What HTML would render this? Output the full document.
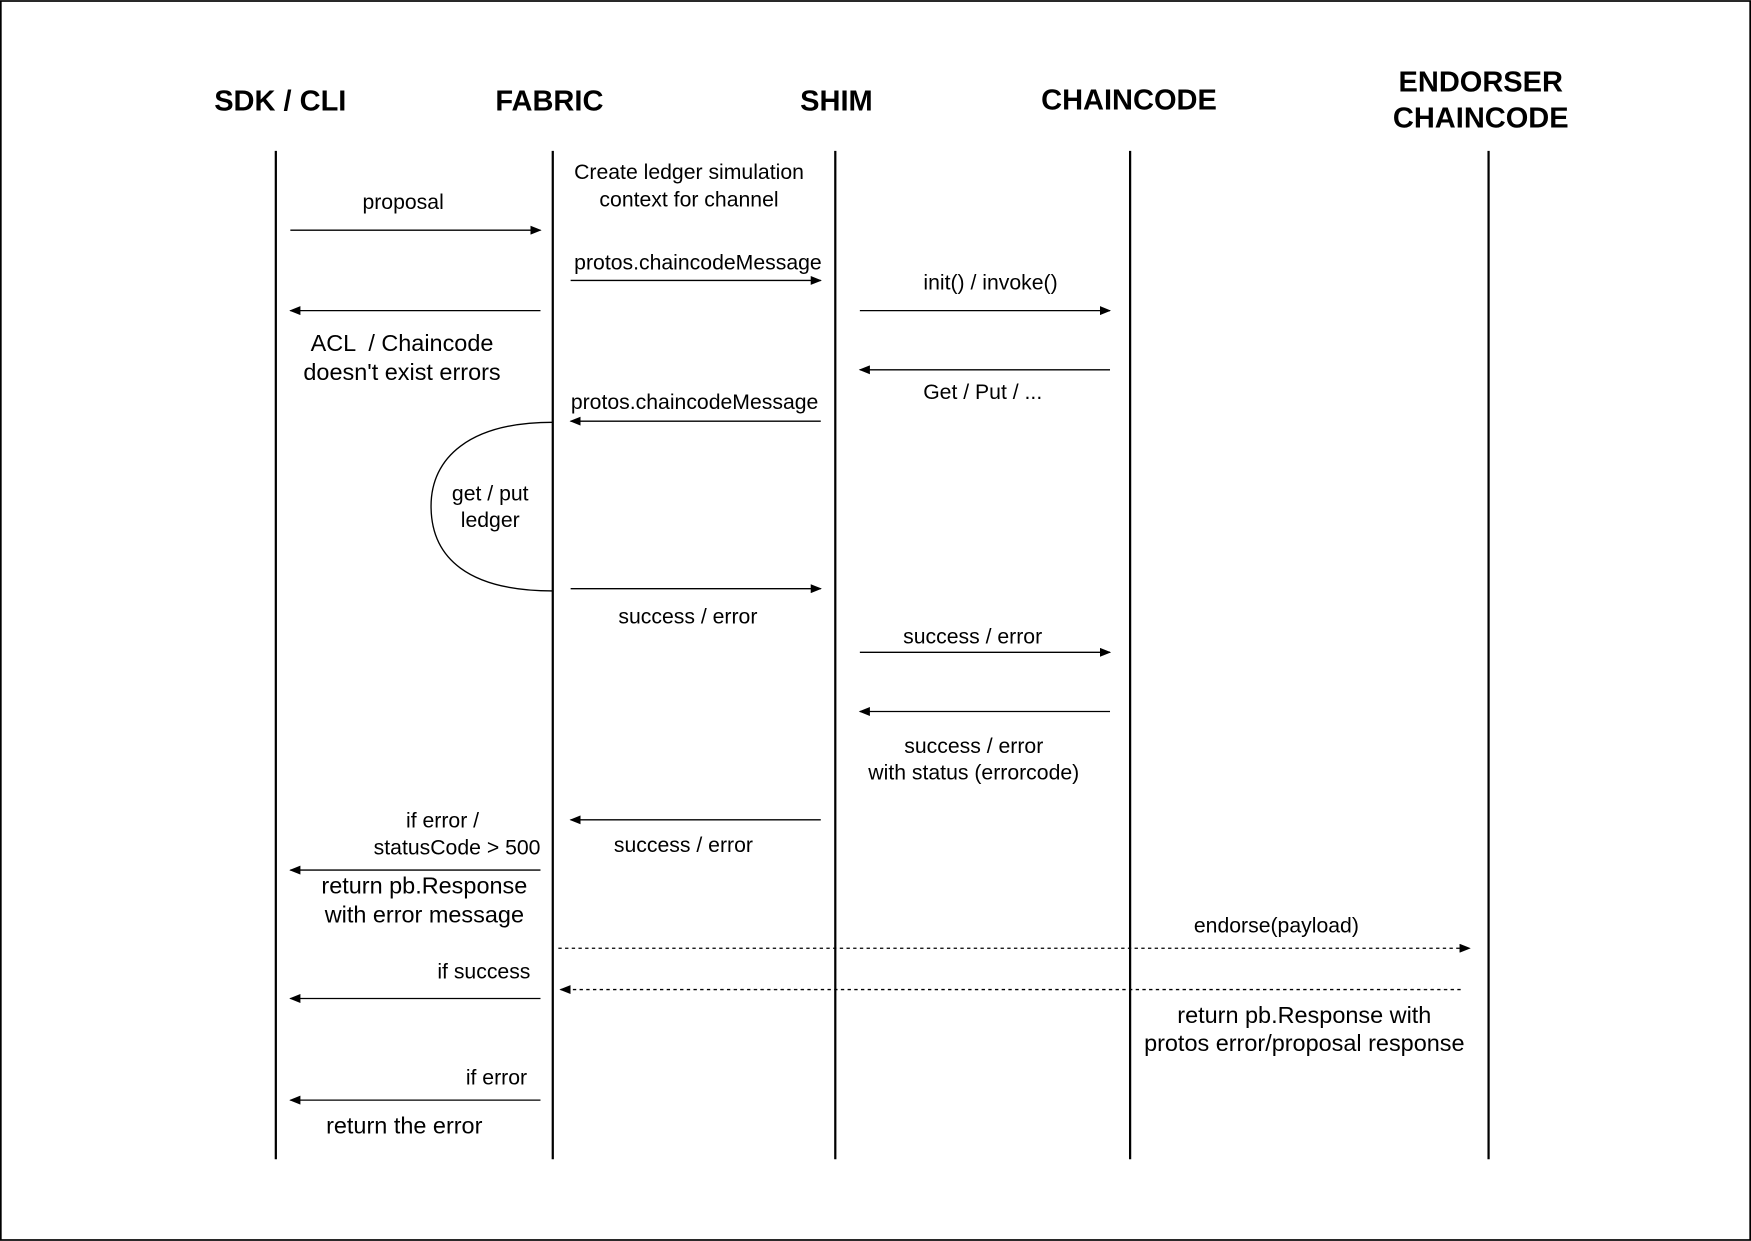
<!DOCTYPE html>
<html><head><meta charset="utf-8"><style>
html,body{margin:0;padding:0;background:#fff}
svg{display:block}
text{font-family:"Liberation Sans",sans-serif;fill:#000}
.h{font-size:26px;font-weight:bold}
.t{font-size:19px}
.b{font-size:21px}
</style></head><body>
<svg width="1751" height="1241" viewBox="0 0 1568 1111" xmlns="http://www.w3.org/2000/svg">
<defs>
<marker id="a" markerWidth="10" markerHeight="8" refX="9" refY="4" orient="auto" markerUnits="userSpaceOnUse">
<path d="M0,0 L10,4 L0,8 Z" fill="#000"/></marker>
</defs>
<rect x="0.75" y="0.75" width="1566.5" height="1109.5" fill="#fff" stroke="#000" stroke-width="1.5"/>
<g class="h" text-anchor="middle">
<text x="251" y="99">SDK / CLI</text>
<text x="492" y="99">FABRIC</text>
<text x="749" y="99">SHIM</text>
<text x="1011" y="98">CHAINCODE</text>
<text x="1326" y="82">ENDORSER</text>
<text x="1326" y="114">CHAINCODE</text>
</g>
<g stroke="#000" stroke-width="2">
<line x1="247" y1="135" x2="247" y2="1038"/>
<line x1="495" y1="135" x2="495" y2="1038"/>
<line x1="748" y1="135" x2="748" y2="1038"/>
<line x1="1012" y1="135" x2="1012" y2="1038"/>
<line x1="1333" y1="135" x2="1333" y2="1038"/>
</g>
<path d="M495,378 C420,378 386,410 386,453 C386,500 420,529 495,529" fill="none" stroke="#000" stroke-width="1.2"/>
<g stroke="#000" stroke-width="1.2" marker-end="url(#a)">
<line x1="260" y1="206" x2="484" y2="206"/>
<line x1="484" y1="278" x2="260" y2="278"/>
<line x1="511" y1="251" x2="735" y2="251"/>
<line x1="770" y1="278" x2="994" y2="278"/>
<line x1="994" y1="331" x2="770" y2="331"/>
<line x1="735" y1="377" x2="511" y2="377"/>
<line x1="511" y1="527" x2="735" y2="527"/>
<line x1="770" y1="584" x2="994" y2="584"/>
<line x1="994" y1="637" x2="770" y2="637"/>
<line x1="735" y1="734" x2="511" y2="734"/>
<line x1="484" y1="779" x2="260" y2="779"/>
<line x1="484" y1="894" x2="260" y2="894"/>
<line x1="484" y1="985" x2="260" y2="985"/>
<line x1="500" y1="849" x2="1316" y2="849" stroke-dasharray="3,3"/>
<line x1="1308" y1="886" x2="502" y2="886" stroke-dasharray="3,3"/>
</g>
<g class="t" text-anchor="middle">
<text x="361" y="187">proposal</text>
<text x="617" y="160">Create ledger simulation</text>
<text x="617" y="185">context for channel</text>
<text x="625" y="241">protos.chaincodeMessage</text>
<text x="887" y="259">init() / invoke()</text>
<text class="b" x="360" y="314">ACL &#160;/ Chaincode</text>
<text class="b" x="360" y="340">doesn't exist errors</text>
<text x="880" y="357">Get / Put / ...</text>
<text x="622" y="366">protos.chaincodeMessage</text>
<text x="439" y="448">get / put</text>
<text x="439" y="472">ledger</text>
<text x="616" y="558">success / error</text>
<text x="871" y="576">success / error</text>
<text x="872" y="674">success / error</text>
<text x="872" y="698">with status (errorcode)</text>
<text x="612" y="763">success / error</text>
<text x="1143" y="835">endorse(payload)</text>
<text class="b" x="1168" y="916">return pb.Response with</text>
<text class="b" x="1168" y="941">protos error/proposal response</text>
<text class="b" x="380" y="800">return pb.Response</text>
<text class="b" x="380" y="826">with error message</text>
<text class="b" x="362" y="1015">return the error</text>
</g>
<g class="t" text-anchor="end">
<text x="429" y="741">if error /</text>
<text x="484" y="765">statusCode &gt; 500</text>
<text x="475" y="876">if success</text>
<text x="472" y="971">if error</text>
</g>
</svg>
</body></html>
